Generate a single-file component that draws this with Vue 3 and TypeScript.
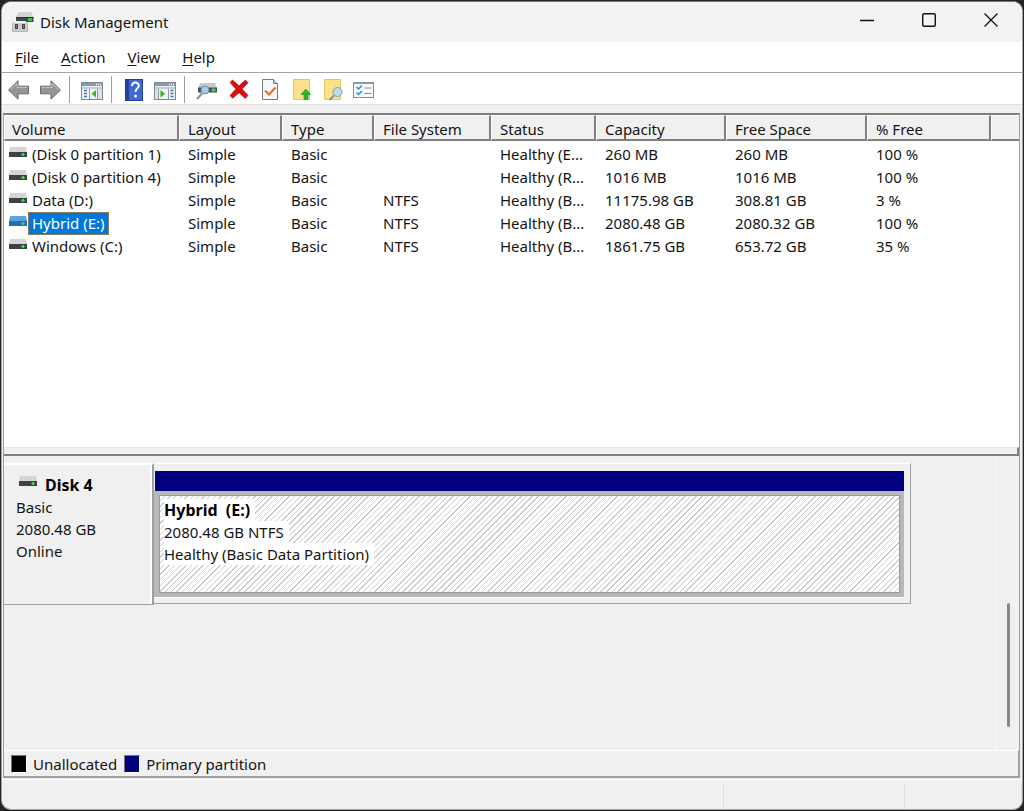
<script setup lang="ts">
import { ref } from 'vue'

interface Volume {
  name: string
  layout: string
  type: string
  fs: string
  status: string
  capacity: string
  free: string
  percent: string
}

const columns = ['Volume', 'Layout', 'Type', 'File System', 'Status', 'Capacity', 'Free Space', '% Free']
const menus = ['File', 'Action', 'View', 'Help']

const volumes: Volume[] = [
  { name: '(Disk 0 partition 1)', layout: 'Simple', type: 'Basic', fs: '', status: 'Healthy (E...', capacity: '260 MB', free: '260 MB', percent: '100 %' },
  { name: '(Disk 0 partition 4)', layout: 'Simple', type: 'Basic', fs: '', status: 'Healthy (R...', capacity: '1016 MB', free: '1016 MB', percent: '100 %' },
  { name: 'Data (D:)', layout: 'Simple', type: 'Basic', fs: 'NTFS', status: 'Healthy (B...', capacity: '11175.98 GB', free: '308.81 GB', percent: '3 %' },
  { name: 'Hybrid (E:)', layout: 'Simple', type: 'Basic', fs: 'NTFS', status: 'Healthy (B...', capacity: '2080.48 GB', free: '2080.32 GB', percent: '100 %' },
  { name: 'Windows (C:)', layout: 'Simple', type: 'Basic', fs: 'NTFS', status: 'Healthy (B...', capacity: '1861.75 GB', free: '653.72 GB', percent: '35 %' },
]

const selected = ref(3)
</script>

<template>
  <div class="desktop">
    <div class="window">
      <header class="titlebar">
        <svg class="app-icon" width="24" height="22" viewBox="0 0 24 22" aria-hidden="true">
          <path d="M6 1h13l2.500 5H4z" fill="#d0d3d5" />
          <path d="M4 6h17.500v5H4z" fill="#45494b" />
          <path d="M4 6h17.500v1H4z" fill="#2c2f31" />
          <rect x="16" y="7" width="4" height="3" fill="#2fc934" />
          <path d="M0 12l2-2h11l3 2v9H0z" fill="#b4b7ba" />
          <path d="M2 10h11l2 2H0z" fill="#eceded" />
          <path d="M1 12h14v8H1z" fill="#cbcdcf" />
          <path d="M3 13h3v5H3zM10 13h3v5h-3z" fill="#44484b" />
          <path d="M4 14h1v3H4zM11 14h1v3h-1z" fill="#74787b" />
        </svg>
        <h1>Disk Management</h1>
        <div class="caption">
          <button aria-label="Minimize"><svg width="16" height="16" viewBox="0 0 16 16"><path d="M1 8.500h14" stroke="#111" stroke-width="1.300" /></svg></button>
          <button aria-label="Maximize"><svg width="16" height="16" viewBox="0 0 16 16"><rect x="1.700" y="1.700" width="12.600" height="12.600" rx="1.500" fill="none" stroke="#111" stroke-width="1.400" /></svg></button>
          <button aria-label="Close"><svg width="16" height="16" viewBox="0 0 16 16"><path d="M1.500 1.500l13 13M14.500 1.500l-13 13" stroke="#111" stroke-width="1.300" /></svg></button>
        </div>
      </header>

      <nav class="menubar">
        <button v-for="m in menus" :key="m"><u>{{ m[0] }}</u>{{ m.slice(1) }}</button>
      </nav>

      <div class="toolbar">
        <button aria-label="Back"><svg width="24" height="24" viewBox="0 0 24 24"><path d="M1.500 12L11 2.800v5.400h10.500v7.600H11v5.400z" fill="#959595" stroke="#686868" stroke-linejoin="round" /><path d="M3.500 11.500L10 5.400v4h10.500" fill="none" stroke="#c4c4c4" /></svg></button>
        <button aria-label="Forward"><svg width="24" height="24" viewBox="0 0 24 24"><path d="M22.500 12L13 2.800v5.400H2.500v7.600H13v5.400z" fill="#959595" stroke="#686868" stroke-linejoin="round" /><path d="M20.500 11.500L14 5.400v4H3.500" fill="none" stroke="#c4c4c4" /></svg></button>
        <span class="sep"></span>
        <button aria-label="Show or hide console tree">
          <svg width="24" height="24" viewBox="0 0 24 24">
            <rect x="1.500" y="4.500" width="21" height="17" fill="#f1f3f5" stroke="#7f8995" />
            <path d="M2 5h20v3H2z" fill="#8c98a8" /><path d="M16 6.500h1M18 6.500h1M20 6.500h1" stroke="#fff" stroke-width="1.500" />
            <path d="M2 9h20v2H2z" fill="#c3cad2" /><path d="M9.500 11v10M17.500 11v10" stroke="#8f99a5" />
            <path d="M4 12.500h3M4 15.500h3M4 18.500h3" stroke="#3c7ac0" stroke-width="1.500" />
            <path d="M18 11h4v10h-4z" fill="#dfe3e8" />
            <path d="M16 12v7.500l-4.500-3.700z" fill="#37b51f" />
          </svg>
        </button>
        <span class="sep"></span>
        <button aria-label="Help">
          <svg width="24" height="24" viewBox="0 0 24 24">
            <rect x="3.500" y="1.500" width="17" height="21" fill="#3f67d6" stroke="#263f94" /><path d="M4 2h3v20H4z" fill="#23409e" />
            <path d="M10 8c0-4.800 7-4.400 6.800-.2-.2 2.700-3.300 2.600-3.300 6.300" fill="none" stroke="#fff" stroke-width="2" /><circle cx="13.500" cy="18" r="1.500" fill="#fff" />
          </svg>
        </button>
        <button aria-label="Show or hide action pane">
          <svg width="24" height="24" viewBox="0 0 24 24">
            <rect x="1.500" y="4.500" width="21" height="17" fill="#f1f3f5" stroke="#7f8995" />
            <path d="M2 5h20v3H2z" fill="#8c98a8" /><path d="M16 6.500h1M18 6.500h1M20 6.500h1" stroke="#fff" stroke-width="1.500" />
            <path d="M2 9h20v2H2z" fill="#c3cad2" /><path d="M5.500 11v10M15.500 11v10" stroke="#8f99a5" />
            <path d="M2 11h3v10H2z" fill="#dfe3e8" />
            <path d="M17.500 12.500h3M17.500 15.500h3M17.500 18.500h3" stroke="#3c7ac0" stroke-width="1.500" />
            <path d="M7.500 12v7.500l4.500-3.700z" fill="#37b51f" />
          </svg>
        </button>
        <span class="sep"></span>
        <button aria-label="Rescan disks">
          <svg width="24" height="24" viewBox="0 0 24 24">
            <path d="M5 5h15l2 5H3z" fill="#c9cccf" /><path d="M3 9.500h19v5H3z" fill="#4a5156" /><path d="M16 12h5M18.500 9.500v5" stroke="#36dc3c" stroke-width="1.500" />
            <path d="M7 15.500L2 21" stroke="#8196a8" stroke-width="2.200" /><circle cx="10" cy="12" r="4" fill="#a9cbe4" stroke="#718da3" />
          </svg>
        </button>
        <button aria-label="Delete"><svg width="24" height="24" viewBox="0 0 24 24"><path d="M6.500 2L13 7.800 19.500 2 22 4.700l-6 6.300 6 6.300-2.700 3.200L13 14.700l-6.300 5.600L4 17.500l6-6.500-6-6.500z" fill="#d80f12" stroke="#ad0d10" stroke-width=".7" /></svg></button>
        <button aria-label="Properties"><svg width="24" height="24" viewBox="0 0 24 24"><path d="M5.500 1.500h11l4 4v16h-15z" fill="#f6f7f8" stroke="#7a7a7a" /><path d="M16.500 1.500v4h4" fill="#ccc" stroke="#7a7a7a" /><path d="M8 12.500l4 4 6.500-7" fill="none" stroke="#f2662c" stroke-width="2" /></svg></button>
        <button aria-label="Export list"><svg width="24" height="24" viewBox="0 0 24 24"><path d="M5.500 1.500h16v20h-16z" fill="#fae18a" stroke="#e7c55e" /><path d="M16 21.500v-5h-3l4.800-5.500 4.800 5.500H20v5z" fill="#2cb529" stroke="#239021" stroke-width=".6" /></svg></button>
        <button aria-label="Find"><svg width="24" height="24" viewBox="0 0 24 24"><path d="M5.500 1.500h16v20h-16z" fill="#fae18a" stroke="#e7c55e" /><path d="M15 17.500L10.500 22" stroke="#8392a0" stroke-width="2" /><circle cx="18.500" cy="14" r="4.500" fill="#bcdaea" stroke="#819fb3" /></svg></button>
        <button aria-label="Options"><svg width="24" height="24" viewBox="0 0 24 24"><rect x="3.500" y="4.500" width="20" height="15" fill="#f7f8f9" stroke="#858c94" /><path d="M3 4h21v2H3z" fill="#8c98a8" /><path d="M6.500 9l2 2L12 7.500M6.500 14.500l2 2L12 13" fill="none" stroke="#2689dc" stroke-width="1.500" /><path d="M14.500 10h7M14.500 15.500h7" stroke="#848b92" stroke-width="1.200" /></svg></button>
      </div>

      <main class="content">
        <section class="volume-list">
          <table>
            <colgroup><col v-for="n in 9" :key="n" :class="'c' + n"></colgroup>
            <thead>
              <tr><th v-for="c in columns" :key="c" scope="col">{{ c }}</th><td class="filler"></td></tr>
            </thead>
            <tbody>
              <tr v-for="(v, i) in volumes" :key="v.name" :class="{ selected: i === selected }" @click="selected = i">
                <td class="name">
                  <div class="name-cell">
                    <svg class="drive" width="18" height="12" viewBox="0 0 18 12" aria-hidden="true"><path class="lid" d="M1 0h16l1 5H0z" /><path class="face" d="M0 5h18v5H0z" /><path class="led" d="M12 7h4v1h-4zM13 6h2v3h-2z" /></svg>
                    <span class="label">{{ v.name }}</span>
                  </div>
                </td>
                <td>{{ v.layout }}</td><td>{{ v.type }}</td><td>{{ v.fs }}</td><td>{{ v.status }}</td><td>{{ v.capacity }}</td><td>{{ v.free }}</td><td>{{ v.percent }}</td><td></td>
              </tr>
            </tbody>
          </table>
        </section>
        <div class="splitter"></div>
        <section class="graph">
          <div class="graph-main">
            <div class="disk-info">
              <h2><svg class="drive" width="18" height="12" viewBox="0 0 18 12" aria-hidden="true"><path class="lid" d="M1 0h16l1 5H0z" /><path class="face" d="M0 5h18v5H0z" /><path class="led" d="M12 7h4v1h-4zM13 6h2v3h-2z" /></svg>Disk 4</h2>
              <p>Basic</p><p>2080.48 GB</p><p>Online</p>
            </div>
            <div class="disk-map">
              <div class="stripe"></div>
              <div class="partition">
                <div class="hatch">
                  <p class="strong">Hybrid&nbsp; (E:)</p>
                  <p>2080.48 GB NTFS</p>
                  <p>Healthy (Basic Data Partition)</p>
                </div>
              </div>
            </div>
          </div>
          <div class="scroll"><div class="thumb"></div></div>
        </section>
        <footer class="legend">
          <span class="swatch black"></span><span>Unallocated</span>
          <span class="swatch navy"></span><span>Primary partition</span>
        </footer>
      </main>
      <div class="statusbar"><span></span><span></span><span></span></div>
    </div>
  </div>
</template>

<style>
body { margin: 0; background: #1f1f1f; }
</style>

<style scoped>
* { box-sizing: border-box; }
.desktop { height: 100vh; padding: 1px; background: #242424; font: 15px/22px "Noto Sans", "Open Sans", sans-serif; color: #141414; }
.window { height: 100%; display: flex; flex-direction: column; overflow: hidden; border: 1px solid #a5a5a5; border-top-color: #777; border-radius: 10px; background: #f0f0f0; }
button { font: inherit; color: inherit; border: 0; padding: 0; background: none; }
h1, h2, p { margin: 0; font-size: inherit; font-weight: normal; }
svg { display: block; flex: none; }
.titlebar { flex: none; height: 40px; display: flex; align-items: center; background: #f3f3f3; padding-left: 10px; gap: 4px; }
.caption { margin-left: auto; display: flex; height: 100%; padding-bottom: 4px; }
.caption button { width: 62px; display: flex; align-items: center; justify-content: center; }
.menubar { flex: none; height: 31px; display: flex; align-items: center; gap: 22px; padding-left: 13px; background: #fff; border-bottom: 1px solid #a5a5a5; }
.menubar u { text-underline-offset: 2px; text-decoration-thickness: 1px; }
.toolbar { flex: none; height: 32px; display: flex; align-items: center; padding: 2px 0 0 5px; background: #fff; border-bottom: 1px solid #e0e0e0; }
.toolbar button { flex: none; width: 31px; }
.sep { width: 1px; height: 27px; margin: 0 10px 0 0; background: #a0a0a0; }
.content { flex: 1; min-height: 0; display: flex; flex-direction: column; margin: 8px 2px 0 1px; border: 1px solid #a0a0a0; border-top: 2px solid #808080; }
.volume-list { flex: none; height: 332px; background: #fff; overflow: hidden; }
table { width: 100%; table-layout: fixed; border-collapse: separate; border-spacing: 0; }
.c1 { width: 175px; } .c2 { width: 103px; } .c3 { width: 92px; } .c4 { width: 117px; } .c5 { width: 105px; }
.c6 { width: 130px; } .c7 { width: 141px; } .c8 { width: 124px; }
th, .filler { height: 26px; padding: 3px 0 0 8px; text-align: left; font-weight: normal; line-height: 20px; border-top: 1px solid #fff; border-left: 1px solid #fff; border-right: 2px solid #808080; border-bottom: 2px solid #808080; background: #f0f0f0; }
th:first-child { padding-left: 7px; }
.filler { border-right: 0; }
tbody td { height: 23px; padding: 0 0 0 9px; line-height: 23px; white-space: nowrap; }
tbody tr:first-child td { height: 25px; padding-top: 2px; }
tbody td.name { padding-left: 5px; }
.name-cell { display: flex; align-items: center; gap: 2px; }
.label { padding: 0 3px 0 2px; border: 1px solid transparent; line-height: 21px; }
.selected .label { background: #0078d7; color: #fff; border-color: #8a7a60; margin-left: -1px; padding: 0 3px; }
.drive { margin-bottom: 4px; }
.lid { fill: #d3d5d7; } .face { fill: #3f4244; } .led { fill: #33dd38; }
.selected .lid { fill: #5fa3db; } .selected .face { fill: #2270b0; } .selected .led { fill: #35bfae; }
.splitter { flex: none; height: 9px; border-top: 1px solid #e6e6e6; border-bottom: 2px solid #808080; border-right: 2px solid #808080; background: #f0f0f0; }
.graph { flex: 1; min-height: 0; display: flex; }
.graph-main { flex: 1; display: flex; align-items: flex-start; padding-top: 7px; border-right: 1px solid #fafafa; }
.disk-info { width: 150px; height: 142px; flex: none; padding: 9px 0 0 12px; border-top: 2px solid #fff; border-bottom: 1px solid #a0a0a0; border-right: 2px solid #a0a0a0; box-shadow: inset -2px 0 #fff; }
.disk-info h2 { display: flex; align-items: center; gap: 8px; padding-left: 3px; font-size: 16px; font-weight: bold; color: #000; }
.disk-info .drive { margin-bottom: 6px; }
.disk-map { width: 757px; height: 141px; padding: 7px 6px 0 0; border-top: 1px solid #fff; border-right: 1px solid #a0a0a0; border-bottom: 1px solid #a0a0a0; }
.stripe { height: 20px; margin-left: 1px; background: #000080; }
.partition { height: 107px; padding: 4px 4px 4px 5px; background: #b8b8b8; border-bottom: 1px solid #fff; }
.hatch { height: 100%; padding: 3px 4px; border: 1px solid #999; background: repeating-linear-gradient(135deg, #fff 0 3px, #ccc 3px 4px); }
.hatch p { width: fit-content; padding-right: 5px; background: #fff; }
.hatch .strong { font-size: 16px; font-weight: bold; color: #000; }
.scroll { flex: none; width: 22px; padding: 147px 0 0 10px; }
.thumb { width: 3px; height: 124px; border-radius: 2px; background: #888; }
.legend { flex: none; height: 27px; display: flex; align-items: center; padding-left: 7px; border-top: 1px solid #fff; border-right: 1px solid #a0a0a0; border-bottom: 1px solid #a0a0a0; gap: 6px; }
.swatch { width: 16px; height: 18px; border: 1px solid #777; border-right-color: #fff; border-bottom-color: #fff; }
.navy { margin-left: 1px; }
.black { background: #000; } .navy { background: #000080; }
.statusbar { flex: none; height: 30px; margin-top: 1px; display: flex; border-top: 1px solid #fafafa; }
.statusbar span { border-right: 1px solid #ddd; flex: 181; margin-top: 4px; }
.statusbar span:first-child { flex: 722; } .statusbar span:last-child { flex: 116; }
</style>
